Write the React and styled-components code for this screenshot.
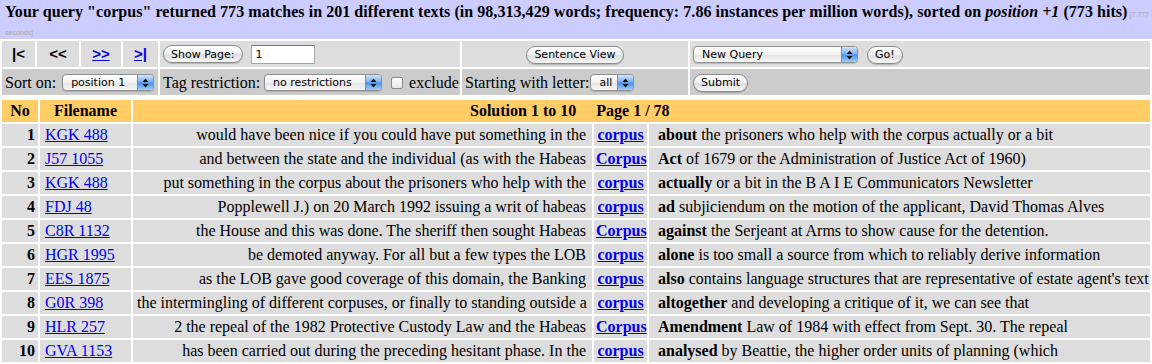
import React from "react";
import styled, { createGlobalStyle } from "styled-components";

const GlobalStyle = createGlobalStyle`
  * { box-sizing: border-box; }
  body {
    margin: 0;
    background: #fff;
    color: #000;
    font-family: "Liberation Serif", "Times New Roman", serif;
    font-size: 16px;
  }
`;

const QueryBar = styled.div`
  background: #ccccff;
  height: 39px;
  padding: 3px 0 0 5px;
  line-height: 18px;
  font-weight: bold;
  letter-spacing: 0.05px;
  overflow: hidden;
`;

const Timing = styled.span`
  font-family: "Liberation Sans", Arial, sans-serif;
  font-weight: normal;
  font-size: 7px;
  line-height: 8px;
  letter-spacing: 0;
  color: #aaaaaa;
`;

const Grid = styled.table`
  width: 100%;
  table-layout: fixed;
  border-collapse: separate;
  border-spacing: 2px;
  margin-top: ${p => p.$mt || 0}px;
`;

const Col = styled.col`
  width: ${p => (p.$w ? `${p.$w}px` : "auto")};
`;

const Ctl = styled.td`
  background: ${p => (p.$dark ? "#cccccc" : "#dddddd")};
  height: 26px;
  padding: 0 3px;
  white-space: nowrap;
  text-align: ${p => p.$align || "left"};
  vertical-align: middle;
`;

const NavLink = styled.span`
  font-family: "Liberation Sans", Arial, sans-serif;
  font-weight: bold;
  font-size: 15px;
  color: ${p => (p.$active ? "#0000ee" : "#000")};
  text-decoration: ${p => (p.$active ? "underline" : "none")};
  cursor: ${p => (p.$active ? "pointer" : "default")};
`;

const AquaButton = styled.button`
  font-family: "DejaVu Sans", "Lucida Grande", sans-serif;
  font-size: 11px;
  height: 18px;
  padding: 0 7px;
  margin: 0;
  border: 1px solid #8c8c8c;
  border-radius: 9px;
  background: linear-gradient(#ffffff, #f3f3f3 45%, #dedede 55%, #f6f6f6);
  color: #000;
  box-shadow: 0 1px 1px rgba(0, 0, 0, 0.18);
  vertical-align: middle;
`;

const PageInput = styled.span`
  display: inline-block;
  width: 64px;
  height: 19px;
  margin-left: 8px;
  padding-left: 4px;
  border: 1px solid #a6a6a6;
  border-top-color: #7a7a7a;
  background: #fff;
  font-family: "DejaVu Sans", sans-serif;
  font-size: 11px;
  line-height: 17px;
  vertical-align: middle;
`;

const PopUp = styled.span`
  display: inline-flex;
  width: ${p => p.$w}px;
  height: 17px;
  margin: 0 ${p => p.$gap || 0}px 0 0;
  border: 1px solid #8f8f8f;
  border-radius: 4px;
  background: linear-gradient(#ffffff, #f1f1f1 50%, #e4e4e4 51%, #f7f7f7);
  box-shadow: 0 1px 1px rgba(0, 0, 0, 0.15);
  overflow: hidden;
  vertical-align: middle;
  font-family: "DejaVu Sans", "Lucida Grande", sans-serif;
  font-size: 11px;
`;

const PopUpLabel = styled.span`
  flex: 1;
  padding-left: 8px;
  line-height: 15px;
  white-space: nowrap;
  overflow: hidden;
`;

const PopUpArrows = styled.span`
  width: 16px;
  display: flex;
  align-items: center;
  justify-content: center;
  border-left: 1px solid #6d8cc0;
  background: linear-gradient(#cfe3fb, #78aef0 48%, #4a8ee6 52%, #9fd0fa);
`;

const Check = styled.span`
  display: inline-block;
  width: 12px;
  height: 12px;
  margin: 0 6px 0 9px;
  border: 1px solid #8a8a8a;
  border-radius: 2px;
  background: linear-gradient(#ffffff, #e6e6e6);
  vertical-align: middle;
`;

const Label = styled.span`
  margin-right: ${p => p.$gap || 5}px;
  vertical-align: middle;
`;

const Th = styled.th`
  background: #ffcc66;
  height: 22px;
  padding: 0 4px;
  text-align: ${p => p.$align || "center"};
  padding-left: ${p => p.$pl || 4}px;
  white-space: nowrap;
`;

const PageNo = styled.span`
  margin-left: 20px;
`;

const Td = styled.td`
  background: #dddddd;
  height: 22px;
  padding: 0 ${p => p.$pr || 4}px 0 ${p => p.$pl || 4}px;
  text-align: ${p => p.$align || "left"};
  font-weight: ${p => (p.$bold ? "bold" : "normal")};
  white-space: nowrap;
  overflow: hidden;
`;

const Link = styled.a`
  color: #0000ee;
  text-decoration: underline;
  font-weight: ${p => (p.$bold ? "bold" : "normal")};
`;

const Arrows = () => (
  <svg width="7" height="10" viewBox="0 0 7 10">
    <path d="M3.5 0.5 L6.5 4 L0.5 4 Z M3.5 9.5 L6.5 6 L0.5 6 Z" fill="#111" />
  </svg>
);

const Select = ({ label, w, gap }) => (
  <PopUp $w={w} $gap={gap}>
    <PopUpLabel>{label}</PopUpLabel>
    <PopUpArrows>
      <Arrows />
    </PopUpArrows>
  </PopUp>
);

const hits = [
  ["KGK 488", "would have been nice if you could have put something in the", "corpus", "about", "the prisoners who help with the corpus actually or a bit"],
  ["J57 1055", "and between the state and the individual (as with the Habeas", "Corpus", "Act", "of 1679 or the Administration of Justice Act of 1960)"],
  ["KGK 488", "put something in the corpus about the prisoners who help with the", "corpus", "actually", "or a bit in the B A I E Communicators Newsletter"],
  ["FDJ 48", "Popplewell J.) on 20 March 1992 issuing a writ of habeas", "corpus", "ad", "subjiciendum on the motion of the applicant, David Thomas Alves"],
  ["C8R 1132", "the House and this was done. The sheriff then sought Habeas", "Corpus", "against", "the Serjeant at Arms to show cause for the detention."],
  ["HGR 1995", "be demoted anyway. For all but a few types the LOB", "corpus", "alone", "is too small a source from which to reliably derive information"],
  ["EES 1875", "as the LOB gave good coverage of this domain, the Banking", "corpus", "also", "contains language structures that are representative of estate agent's text"],
  ["G0R 398", "the intermingling of different corpuses, or finally to standing outside a", "corpus", "altogether", "and developing a critique of it, we can see that"],
  ["HLR 257", "2 the repeal of the 1982 Protective Custody Law and the Habeas", "Corpus", "Amendment", "Law of 1984 with effect from Sept. 30. The repeal"],
  ["GVA 1153", "has been carried out during the preceding hesitant phase. In the", "corpus", "analysed", "by Beattie, the higher order units of planning (which"],
];

export default function App() {
  return (
    <>
      <GlobalStyle />
      <QueryBar>
        Your query "corpus" returned 773 matches in 201 different texts (in 98,313,429 words;
        frequency: 7.86 instances per million words), sorted on <i>position +1</i> (773 hits)
        <Timing> [7.777</Timing> <Timing>seconds]</Timing>
      </QueryBar>

      <Grid>
        <colgroup>
          <Col $w={33} />
          <Col $w={42} />
          <Col $w={40} />
          <Col $w={35} />
          <Col $w={300} />
          <Col $w={226} />
          <Col />
        </colgroup>
        <tbody>
          <tr>
            <Ctl $align="center"><NavLink>|&lt;</NavLink></Ctl>
            <Ctl $align="center"><NavLink>&lt;&lt;</NavLink></Ctl>
            <Ctl $align="center"><NavLink $active>&gt;&gt;</NavLink></Ctl>
            <Ctl $align="center"><NavLink $active>&gt;|</NavLink></Ctl>
            <Ctl>
              <AquaButton>Show Page:</AquaButton>
              <PageInput>1</PageInput>
            </Ctl>
            <Ctl $align="center">
              <AquaButton>Sentence View</AquaButton>
            </Ctl>
            <Ctl>
              <Select label="New Query" w={165} gap={9} />
              <AquaButton>Go!</AquaButton>
            </Ctl>
          </tr>
          <tr>
            <Ctl $dark colSpan={4}>
              <Label $gap={6}>Sort on:</Label>
              <Select label="position 1" w={92} />
            </Ctl>
            <Ctl $dark>
              <Label $gap={4}>Tag restriction:</Label>
              <Select label="no restrictions" w={118} />
              <Check />
              <Label>exclude</Label>
            </Ctl>
            <Ctl $dark>
              <Label $gap={1}>Starting with letter:</Label>
              <Select label="all" w={44} />
            </Ctl>
            <Ctl $dark>
              <AquaButton>Submit</AquaButton>
            </Ctl>
          </tr>
        </tbody>
      </Grid>

      <Grid $mt={1}>
        <colgroup>
          <Col $w={36} />
          <Col $w={91} />
          <Col $w={459} />
          <Col $w={53} />
          <Col />
        </colgroup>
        <thead>
          <tr>
            <Th>No</Th>
            <Th>Filename</Th>
            <Th colSpan={3} $align="left" $pl={337}>
              Solution 1 to 10<PageNo>Page 1 / 78</PageNo>
            </Th>
          </tr>
        </thead>
        <tbody>
          {hits.map(([file, left, node, first, rest], i) => (
            <tr key={i}>
              <Td $align="right" $bold $pr={3}>{i + 1}</Td>
              <Td $pl={5}><Link>{file}</Link></Td>
              <Td $align="right" $pr={6}>{left}</Td>
              <Td $align="center" $pl={2} $pr={2}><Link $bold>{node}</Link></Td>
              <Td $pl={9}><b>{first}</b> {rest}</Td>
            </tr>
          ))}
        </tbody>
      </Grid>
    </>
  );
}
